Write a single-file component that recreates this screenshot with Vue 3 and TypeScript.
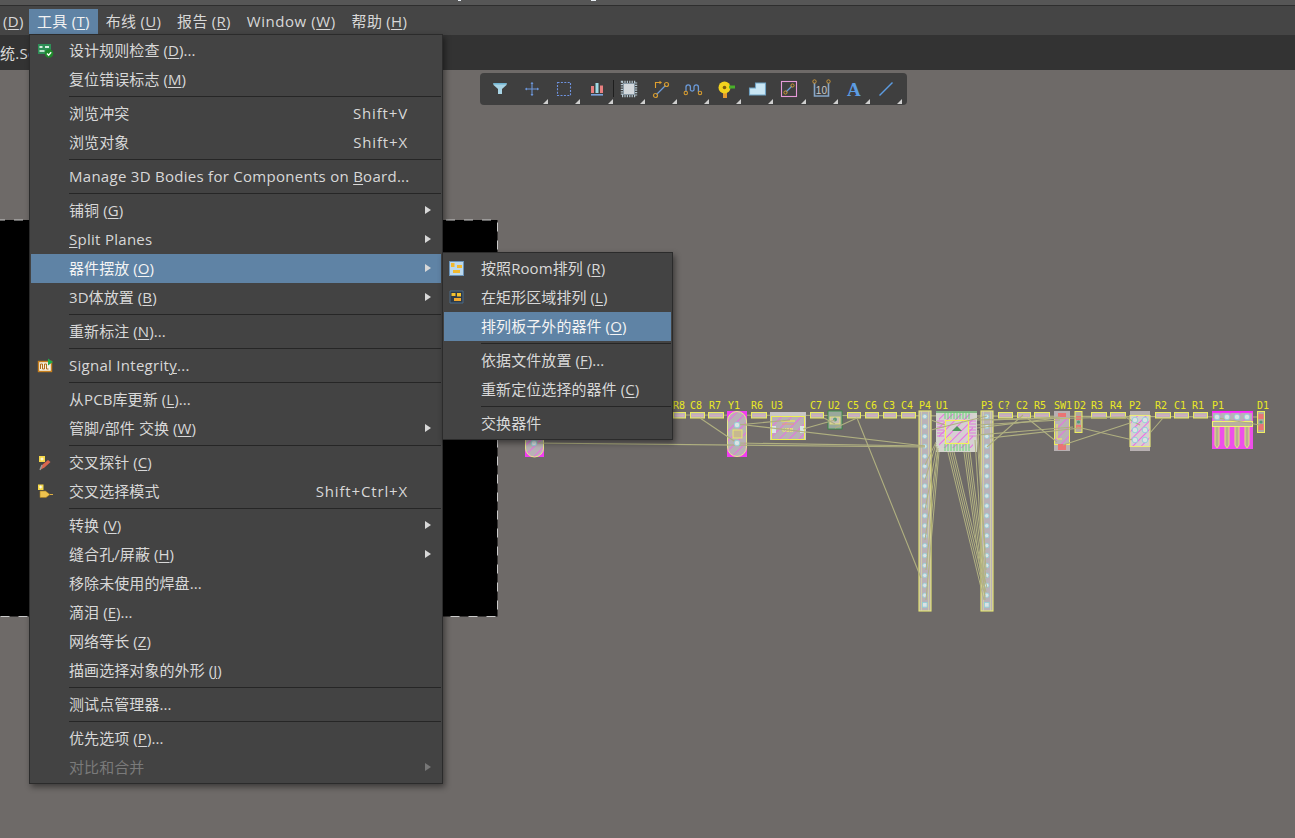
<script setup lang="ts">
interface Row {
  pre?: string; key?: string; post?: string; sc?: string; arrow?: boolean;
  icon?: string; sep?: boolean; active?: boolean; disabled?: boolean;
}
const r = (pre: string, key = '', post = '', extra: Partial<Row> = {}): Row => ({ pre, key, post, ...extra });
const SEP: Row = { sep: true };
const hasCjk = (row: Row) => /[\u4e00-\u9fff]/.test(row.pre ?? '');

const mainRows: Row[] = [
  r('设计规则检查 (', 'D', ')...', { icon: 'drc' }),
  r('复位错误标志 (', 'M', ')'),
  SEP,
  r('浏览冲突', '', '', { sc: 'Shift+V' }),
  r('浏览对象', '', '', { sc: 'Shift+X' }),
  SEP,
  r('Manage 3D Bodies for Components on ', 'B', 'oard...'),
  SEP,
  r('铺铜 (', 'G', ')', { arrow: true }),
  r('', 'S', 'plit Planes', { arrow: true }),
  r('器件摆放 (', 'O', ')', { arrow: true, active: true }),
  r('3D体放置 (', 'B', ')', { arrow: true }),
  SEP,
  r('重新标注 (', 'N', ')...'),
  SEP,
  r('Signal Integrit', 'y', '...', { icon: 'si' }),
  SEP,
  r('从PCB库更新 (', 'L', ')...'),
  r('管脚/部件 交换 (', 'W', ')', { arrow: true }),
  SEP,
  r('交叉探针 (', 'C', ')', { icon: 'probe' }),
  r('交叉选择模式', '', '', { icon: 'cross', sc: 'Shift+Ctrl+X' }),
  SEP,
  r('转换 (', 'V', ')', { arrow: true }),
  r('缝合孔/屏蔽 (', 'H', ')', { arrow: true }),
  r('移除未使用的焊盘...'),
  r('滴泪 (', 'E', ')...'),
  r('网络等长 (', 'Z', ')'),
  r('描画选择对象的外形 (', 'J', ')'),
  SEP,
  r('测试点管理器...'),
  SEP,
  r('优先选项 (', 'P', ')...'),
  r('对比和合并', '', '', { arrow: true, disabled: true }),
];
const subRows: Row[] = [
  r('按照Room排列 (', 'R', ')', { icon: 'room' }),
  r('在矩形区域排列 (', 'L', ')', { icon: 'rect' }),
  r('排列板子外的器件 (', 'O', ')', { active: true }),
  SEP,
  r('依据文件放置 (', 'F', ')...'),
  r('重新定位选择的器件 (', 'C', ')'),
  SEP,
  r('交换器件'),
];
const menus = [
  { cls: 'menu-main', rows: mainRows },
  { cls: 'menu-sub', rows: subRows },
];
const menubar = [
  { pre: '', key: 'D', label: '(D)', cls: 'clip' },
  { pre: '工具 (', key: 'T', post: ')', cls: 'open' },
  { pre: '布线 (', key: 'U', post: ')', cls: '' },
  { pre: '报告 (', key: 'R', post: ')', cls: '' },
  { pre: 'Window (', key: 'W', post: ')', cls: 'wide' },
  { pre: '帮助 (', key: 'H', post: ')', cls: '' },
];

const icons: Record<string, string> = {
  drc: '<rect x="1" y="1" width="13" height="10" fill="#2f8f57"/><rect x="2.5" y="3" width="3" height="2" fill="#d8efe0"/><rect x="8" y="3" width="4" height="2" fill="#d8efe0"/><rect x="2.5" y="7" width="5" height="2" fill="#bfe3cc"/><circle cx="12" cy="10.5" r="4.3" fill="#1f8a2a"/><path d="M10 10.5l1.6 1.7 2.6-3" stroke="#fff" stroke-width="1.3" fill="none"/>',
  si: '<rect x="1.5" y="3.5" width="13" height="10" fill="#f4efe2" stroke="#c8801e" stroke-width="1.4"/><path d="M3.5 11V6h2v5h2V6h2v5h2" stroke="#b06a18" fill="none"/><path d="M11 0.5l5 3.5-5 3.5z" fill="#22a84a"/>',
  probe: '<rect x="2" y="1" width="6" height="6" fill="#f6d94a"/><path d="M4.5 2.5h1v1h1v1h-1v1h-1v-1h-1v-1h1z" fill="#fff"/><path d="M3 15l2-5 6-5 2.5 2-6 5.5z" fill="#d8664e"/><path d="M3 15l2-5" stroke="#9a9a9a" stroke-width="1.4"/>',
  cross: '<rect x="1" y="0.5" width="5.5" height="5.5" fill="#f6d94a"/><path d="M3.2 1.6h1v1h1v1h-1v1h-1v-1h-1v-1h1z" fill="#fff"/><path d="M3 7h5.5l4.5 3.5-4 3H3z" fill="#eec24e" stroke="#a67c1e" stroke-width=".6"/><path d="M13 10.5h3" stroke="#e0b040"/>',
  room: '<rect x="0.5" y="0.5" width="14" height="14" fill="#bcd9ee" stroke="#6a93b8"/><rect x="2" y="2" width="3.5" height="4" fill="#f2b92e"/><rect x="8" y="4" width="5" height="3" fill="#f2b92e"/><rect x="4" y="9" width="7" height="3" fill="#f2b92e"/>',
  rect: '<path d="M1 1h13v12H1z" fill="#2d3a48" stroke="#4d6a86"/><rect x="2.5" y="3" width="4" height="3" fill="#f2c12e"/><rect x="8" y="3" width="4" height="3.5" fill="#f2c12e"/><rect x="5" y="8" width="7" height="3" fill="#f2a92e"/>',
};

interface Tool { svg: string; corner: boolean }
const tools: Tool[] = [
  { corner: false, svg: '<path d="M5.5 6h13v2l-4.5 4v5h-4v-5L5.5 8z" fill="#a8d3e4"/><path d="M5.5 6h13v1.5h-13z" fill="#6fb2cf"/>' },
  { corner: true, svg: '<path d="M12 5.5v13M5.5 12h13" stroke="#6c95d8" stroke-width="1.1"/><path d="M10.5 7L12 5l1.5 2zM10.5 17l1.5 2 1.5-2zM7 10.5L5 12l2 1.5zM17 10.5l2 1.5-2 1.5z" fill="#6c95d8"/>' },
  { corner: true, svg: '<rect x="5.5" y="5.5" width="13" height="13" fill="none" stroke="#6f93e0" stroke-width="1.1" stroke-dasharray="2 1.4"/>' },
  { corner: true, svg: '<rect x="6" y="9" width="3" height="7" fill="#e98080"/><rect x="10.5" y="6" width="3" height="10" fill="#9fdbe6"/><rect x="15" y="8.5" width="3" height="7.5" fill="#e98080"/><rect x="6" y="17" width="12" height="1.6" fill="#7ba3dc"/>' },
  { corner: true, svg: '<rect x="5" y="5" width="14" height="14" fill="none" stroke="#b4c6d0" stroke-width="2.4" stroke-dasharray="1.2 1.2"/><rect x="6.5" y="6.5" width="11" height="11" fill="#d3d8dc" stroke="#8a9aa6"/>' },
  { corner: true, svg: '<path d="M6.5 11V5.5H11" stroke="#e0a030" fill="none" stroke-width="1.1"/><path d="M10.5 3.8L13 5.5l-2.5 1.7z" fill="#e0a030"/><path d="M7.5 17.5l9-9" stroke="#6b9ad8" stroke-width="1.3"/><circle cx="6.5" cy="18.5" r="2" fill="none" stroke="#d39a30" stroke-width="1.2"/><circle cx="17.5" cy="7.5" r="2" fill="none" stroke="#d39a30" stroke-width="1.2"/>' },
  { corner: true, svg: '<path d="M5 15V10a2.2 2.2 0 0 1 4.4 0v3a2 2 0 0 0 3.6 0v-3a2.2 2.2 0 0 1 4.4 0v5" fill="none" stroke="#6b9ad8" stroke-width="1.3"/><circle cx="4.8" cy="16" r="1.7" fill="none" stroke="#d39a30" stroke-width="1.1"/><circle cx="19" cy="16" r="1.7" fill="none" stroke="#d39a30" stroke-width="1.1"/>' },
  { corner: true, svg: '<rect x="10" y="16" width="4" height="5" fill="#e69a2e"/><circle cx="11.5" cy="10.5" r="6" fill="#f2d21e"/><circle cx="11.5" cy="10.5" r="1.8" fill="#7c5c10"/><rect x="16" y="8.5" width="6" height="3" fill="#49b02a"/>' },
  { corner: true, svg: '<path d="M4.5 18v-7h6V6h10v12z" fill="#c9e6f4" stroke="#6fa3c6" stroke-width="1.1"/>' },
  { corner: true, svg: '<rect x="4.5" y="4.5" width="15" height="15" fill="none" stroke="#e79ad8" stroke-width="1.1"/><path d="M9 15l6-6" stroke="#6b9ad8" stroke-width="1.3"/><circle cx="8.5" cy="15.5" r="1.6" fill="none" stroke="#d39a30"/><circle cx="15.5" cy="8.5" r="1.6" fill="none" stroke="#d39a30"/>' },
  { corner: true, svg: '<path d="M4.5 6v13h14V6" fill="none" stroke="#86a6c8" stroke-width="1.6"/><circle cx="4.5" cy="4.5" r="1.7" fill="none" stroke="#c8953a"/><circle cx="18.5" cy="4.5" r="1.7" fill="none" stroke="#c8953a"/><text x="11.5" y="16.5" text-anchor="middle" font-size="10" font-family="Liberation Sans" fill="#c8c8c8">10</text>' },
  { corner: true, svg: '<text x="12" y="19" text-anchor="middle" font-size="19" font-weight="700" font-family="Liberation Serif" fill="#5c9ce2">A</text>' },
  { corner: true, svg: '<path d="M5.5 18.5l13-13" stroke="#5c9ce2" stroke-width="1.5"/>' },
];

/* PCB canvas data — page coordinates */
const Y_BASE = 409;
const labels: [string, number][] = [
  ['R8', 673], ['C8', 690], ['R7', 709], ['Y1', 728], ['R6', 751], ['U3', 771], ['C7', 810], ['U2', 828],
  ['C5', 847], ['C6', 865], ['C3', 883], ['C4', 901], ['P4', 919], ['U1', 936], ['P3', 981], ['C?', 998],
  ['C2', 1016], ['R5', 1034], ['SW1', 1054], ['D2', 1074], ['R3', 1091], ['R4', 1110], ['P2', 1129],
  ['R2', 1155], ['C1', 1174], ['R1', 1192], ['P1', 1212], ['D1', 1257],
];
const smd: [number, number][] = [
  [673, 685], [690, 704], [708, 723], [751, 766], [810, 823], [847, 860], [865, 878], [883, 896], [901, 915],
  [998, 1012], [1017, 1030], [1034, 1049], [1091, 1106], [1110, 1125], [1155, 1170], [1174, 1188], [1193, 1207],
];
const headerPads = Array.from({ length: 20 }, (_, i) => 416.5 + i * 9.93);
const padsExtra: [number, number][] = [
  [534, 443], [737, 425], [737, 443],
  [1135, 420], [1145, 420], [1135, 430], [1145, 430], [1135, 440], [1145, 440],
  [1217, 417], [1227, 417], [1237, 417], [1247, 417],
];
const fan: [number, number, number, number][] = [
  [948, 452, 984, 600], [950, 452, 985, 596], [952, 452, 986, 592], [954, 452, 987, 588],
  [964, 452, 983, 590], [966, 452, 984, 586], [968, 452, 985, 582], [970, 452, 986, 578],
  [975, 440, 985, 600], [977, 435, 986, 570], [978, 430, 985, 550],
  [939, 452, 926, 600], [938, 450, 926, 570], [938, 448, 925, 540], [937, 446, 925, 510], [936, 444, 925, 480], [936, 442, 925, 465],
];
const rats: [number, number, number, number][] = [
  [700, 418, 737, 443], [737, 424, 925, 446], [737, 443, 925, 446], [534, 443, 925, 447],
  [737, 425, 790, 420], [803, 429, 835, 420], [824, 418, 835, 424], [857, 418, 835, 428], [857, 418, 921, 578],
  [987, 447, 1023, 415], [1027, 418, 1057, 442], [1063, 445, 1130, 423], [1077, 427, 1133, 440], [1150, 433, 1163, 418],
  [977, 435, 1073, 427], [977, 428, 1057, 418], [990, 438, 1080, 428], [977, 420, 1130, 417], [977, 425, 1060, 420],
  [931, 430, 987, 416], [931, 420, 945, 425], [992, 420, 1060, 417], [1125, 417, 1140, 425], [1212, 417, 1260, 425],
];
</script>

<template>
  <div class="app">
    <div class="topstrip"><i class="frag f1"></i><i class="frag f2"></i></div>
    <div class="menubar">
      <div v-for="m in menubar" :key="m.key" class="mb-item" :class="m.cls">
        <template v-if="m.label">(<u>D</u>)</template>
        <template v-else>{{ m.pre }}<u>{{ m.key }}</u>{{ m.post }}</template>
      </div>
    </div>
    <div class="tabbar"><span class="tab">统.SchDoc</span></div>

    <div class="canvas">
      <svg class="board" viewBox="0 70 1295 768" width="1295" height="768">
        <defs>
          <pattern id="hatch" width="7" height="7" patternUnits="userSpaceOnUse" patternTransform="rotate(45)">
            <rect width="7" height="7" fill="#b9b1b7" />
            <rect width="1" height="7" fill="#e86fe0" />
          </pattern>
          <pattern id="hatchB" width="6" height="6" patternUnits="userSpaceOnUse" patternTransform="rotate(45)">
            <rect width="6" height="6" fill="#d6cfd2" />
            <rect width=".9" height="6" fill="#ee62e6" />
          </pattern>
        </defs>

        <rect x="-4" y="220" width="501.5" height="396.5" fill="#000" stroke="#c9c9c9" stroke-width="1" stroke-dasharray="9 9" />

        <!-- main horizontal connection runs under the footprints -->
        <line x1="673" y1="415" x2="1262" y2="417" stroke="#b0b080" stroke-width="1.1" />

        <!-- footprints -->
        <rect x="525" y="400" width="19" height="57" fill="#f23cf2" />
        <rect x="525.5" y="400" width="18" height="57" rx="9" fill="url(#hatch)" stroke="#e8e88a" />
        <rect x="727" y="411" width="20" height="46" fill="#f23cf2" />
        <rect x="727.5" y="411.5" width="19" height="45" rx="9.5" fill="url(#hatch)" stroke="#e8e88a" />
        <rect x="733" y="430" width="9" height="8" fill="#c8b890" stroke="#e8e870" />

        <rect x="770" y="412" width="36" height="28" fill="#c9c6c6" />
        <rect x="771.5" y="416.5" width="33" height="23" fill="url(#hatch)" stroke="#eeee50" />
        <path d="M781 421h14" stroke="#eeee50" stroke-width="1.2" /><path d="M782 424h12" stroke="#e8a070" />
        <rect x="772" y="426" width="4" height="7" fill="#d8e4e6" /><rect x="800" y="426" width="4" height="7" fill="#d8e4e6" />
        <text x="782" y="432" font-size="5" font-family="Liberation Sans" font-weight="700" fill="#eeee60">USB</text>

        <rect x="828" y="411" width="14" height="18" fill="#9aa89c" stroke="#2f8a3c" stroke-width=".8" />
        <rect x="830" y="417" width="10" height="7" fill="#c8c0b8" stroke="#eeee60" stroke-width=".7" />
        <circle cx="835" cy="419.5" r="2" fill="#5c9c78" />

        <rect v-for="(s, i) in smd" :key="'s' + i" :x="s[0] + .5" y="412.5" :width="s[1] - s[0]" height="5.5" fill="#bdb4b6" stroke="#ecec62" />
        <path v-for="(s, i) in smd" :key="'sl' + i" :d="`M${s[0] + 2} 415.3H${s[1] - 1}`" stroke="#e8a0c8" stroke-width=".7" />

        <g v-for="x in [919, 981]" :key="'hdr' + x">
          <rect :x="x" y="411" width="12" height="200" fill="#bab2b8" stroke="#ecec72" stroke-width="1.1" />
          <path :d="`M${x + 2.5} 411V611M${x + 9.5} 411V611`" stroke="#d8d8a0" stroke-width=".7" />
          <circle v-for="y in headerPads" :key="y" :cx="x + 5.8" :cy="y" r="2.2" fill="#dbe2e4" stroke="#8fd0d8" stroke-width=".8" />
          <rect :x="x + 3.5" y="602.5" width="4.6" height="4.6" fill="#dbe2e4" stroke="#8fd0d8" stroke-width=".8" />
        </g>

        <rect x="936" y="411" width="41" height="41" fill="#d4d5cd" />
        <rect x="936" y="411.5" width="41" height="1" fill="#2f9a3c" />
        <rect x="939" y="414" width="34" height="34" fill="url(#hatchB)" />
        <path d="M945 412v7M948 412v7M951 412v7M954 412v7M957 412v7M960 412v7M963 412v7M966 412v7M969 412v7M945 444v7M948 444v7M951 444v7M954 444v7M957 444v7M960 444v7M963 444v7M966 444v7M969 444v7" stroke="#5fd86f" stroke-width=".9" />
        <path d="M937 421h7M937 424h7M937 427h7M937 430h7M937 433h7M937 436h7M969 421h7M969 424h7M969 427h7M969 430h7M969 433h7M969 436h7" stroke="#e26fe0" stroke-width=".9" />
        <rect x="945.5" y="420.5" width="23" height="23" fill="none" stroke="#f2f25c" stroke-width="1.2" />
        <path d="M952 431l5-5 5 5z" fill="#4f9a5c" />
        <circle cx="949.5" cy="438.5" r="1.6" fill="none" stroke="#f2f25c" />

        <rect x="1054" y="411" width="16" height="40" fill="#b8b0b2" />
        <rect x="1054.5" y="418.5" width="15" height="26" fill="url(#hatch)" stroke="#eeee5e" />
        <rect x="1058" y="413" width="8" height="4" fill="#ea7474" /><rect x="1058" y="444" width="8" height="6" fill="#ea7474" />
        <path d="M1057 424v15h5" fill="none" stroke="#eeee5e" />
        <rect x="1075" y="411.5" width="7" height="21" fill="#b0a8a0" stroke="#eeee5e" />
        <rect x="1076" y="416" width="5" height="4" fill="#ea7474" /><rect x="1076" y="425" width="5" height="4" fill="#ea7474" />
        <circle cx="1078.5" cy="422" r="1.6" fill="#4f9a7c" />

        <rect x="1130" y="411" width="20" height="40" fill="#b8b0b2" />
        <rect x="1130" y="415.5" width="20" height="31" fill="url(#hatchB)" stroke="#ecec7a" stroke-width="1.1" />

        <rect x="1212" y="411" width="41" height="38" fill="#ee4fea" />
        <rect x="1212" y="411" width="41" height="1.5" fill="#ff22ff" />
        <rect x="1213" y="413" width="39" height="8" fill="url(#hatch)" />
        <rect x="1212.5" y="421.5" width="40" height="5" fill="#b8b0a0" stroke="#f2f270" />
        <g v-for="x in [1217, 1227, 1237, 1247]" :key="'fg' + x">
          <path :d="`M${x - 2} 427v18l2 3 2-3v-18`" fill="#b8b090" stroke="#e4e480" />
        </g>
        <rect x="1257.5" y="411.5" width="7" height="21" fill="#b0a8a0" stroke="#eeee5e" />
        <rect x="1258.5" y="414" width="5" height="5" fill="#ea7474" /><rect x="1258.5" y="424" width="5" height="6" fill="#ea7474" />
        <circle cx="1261" cy="422" r="1.6" fill="#4f9a7c" />

        <!-- connection lines -->
        <line v-for="(l, i) in fan" :key="'f' + i" :x1="l[0]" :y1="l[1]" :x2="l[2]" :y2="l[3]" stroke="#b2b282" stroke-width="1" />
        <line v-for="(l, i) in rats" :key="'r' + i" :x1="l[0]" :y1="l[1]" :x2="l[2]" :y2="l[3]" stroke="#b0b080" stroke-width="1.1" />

        <circle v-for="(p, i) in padsExtra" :key="'p' + i" :cx="p[0]" :cy="p[1]" r="2.8" fill="#dbe2e4" stroke="#8fd0d8" stroke-width=".9" />

        <text v-for="l in labels" :key="l[0]" :x="l[1]" :y="Y_BASE" class="ref">{{ l[0] }}</text>
      </svg>

      <div class="toolbar">
        <div v-for="(t, i) in tools" :key="i" class="tool" :class="{ divided: i === 4 }">
          <svg width="24" height="24" viewBox="0 0 24 24" v-html="t.svg"></svg>
          <span v-if="t.corner" class="corner"></span>
        </div>
      </div>
    </div>

    <div v-for="menu in menus" :key="menu.cls" class="menu" :class="menu.cls">
      <template v-for="(row, i) in menu.rows" :key="i">
        <div v-if="row.sep" class="sep"></div>
        <div v-else class="row" :class="{ active: row.active, disabled: row.disabled, cjk: hasCjk(row) }">
          <span class="ico"><svg v-if="row.icon" width="17" height="16" viewBox="0 0 17 16" v-html="icons[row.icon]"></svg></span>
          <span class="label">{{ row.pre }}<u v-if="row.key">{{ row.key }}</u>{{ row.post }}</span>
          <span v-if="row.sc" class="sc">{{ row.sc }}</span>
          <span v-if="row.arrow" class="arrow"></span>
        </div>
      </template>
    </div>
  </div>
</template>

<style>
html, body { margin: 0; height: 100%; overflow: hidden; background: #6e6a68; }
</style>

<style scoped>
.app {
  position: relative;
  width: 1295px;
  height: 838px;
  display: flex;
  flex-direction: column;
  overflow: hidden;
  font: 15px/1 "Open Sans", "Noto Sans CJK SC", sans-serif;
  letter-spacing: .28px;
  color: #d8d8d8;
}
u { text-underline-offset: 2px; text-decoration-thickness: 1px; }
.topstrip { position: relative; height: 5px; background: #565656; border-bottom: 1px solid #2e2e2e; flex: none; }
.frag { position: absolute; top: 0; height: 1px; background: #e8eef4; }
.f1 { left: 458px; width: 3px; }
.f2 { left: 591px; width: 5px; }
.menubar { height: 29px; background: #454545; display: flex; align-items: flex-end; flex: none; }
.mb-item { height: 26px; line-height: 25px; padding: 0 8px; white-space: nowrap; flex: none; }
.mb-item.clip { width: 29px; padding: 0 0 0 3px; box-sizing: border-box; }
.mb-item.wide { letter-spacing: .55px; }
.mb-item.open { background: #5f83a5; color: #f2f2f2; }
.tabbar { height: 35px; background: #333; flex: none; display: flex; align-items: center; }
.tab { padding-top: 2px; }
.canvas { position: relative; flex: 1; background: #6e6a68; }
.board { display: block; }
.ref { font: 10px "DejaVu Sans Mono", monospace; letter-spacing: 0; fill: #eaea24; }

.toolbar {
  position: absolute; left: 480px; top: 3px; height: 32px; padding-left: 4px; padding-right: 1px;
  display: flex; background: #3f3f3f; border-radius: 4px; box-sizing: border-box; width: 427px;
}
.tool { position: relative; width: 32.17px; height: 32px; display: flex; align-items: center; justify-content: center; flex: none; }
.tool.divided::before { content: ""; position: absolute; left: 0; top: 7px; height: 17px; width: 1px; background: #1e1e1e; }
.corner {
  position: absolute; right: 0; bottom: 1px; width: 0; height: 0;
  border-left: 5px solid transparent; border-bottom: 5px solid #cfcfcf;
}

.menu {
  position: absolute; box-sizing: border-box; background: #434343; border: 1px solid #2b2b2b; padding: 1px;
  box-shadow: 2px 3px 6px rgba(0, 0, 0, .45);
}
.menu-main { left: 29px; top: 34px; width: 414px; height: 750px; }
.menu-sub { left: 442px; top: 252px; width: 231px; height: 188px; }
.menu-sub .ico { width: 37px; padding-left: 5px; }
.menu-sub .sep { margin-left: 37px; }
.row { position: relative; height: 29px; display: flex; align-items: center; white-space: nowrap; }
.row.cjk .label { letter-spacing: .08px; }
.row.active { background: #5f83a5; color: #f4f4f4; }
.row.disabled { color: #7a7a7a; }
.ico { width: 38px; flex: none; display: flex; padding-left: 6px; box-sizing: border-box; }
.sc { position: absolute; right: 33px; letter-spacing: .85px; }
.arrow {
  position: absolute; right: 10px; top: 10px; width: 0; height: 0;
  border-left: 6px solid #d8d8d8; border-top: 4.5px solid transparent; border-bottom: 4.5px solid transparent;
}
.row.disabled .arrow { border-left-color: #777; }
.sep { height: 1px; margin: 2px 0 2px 38px; background: #262626; }
</style>
